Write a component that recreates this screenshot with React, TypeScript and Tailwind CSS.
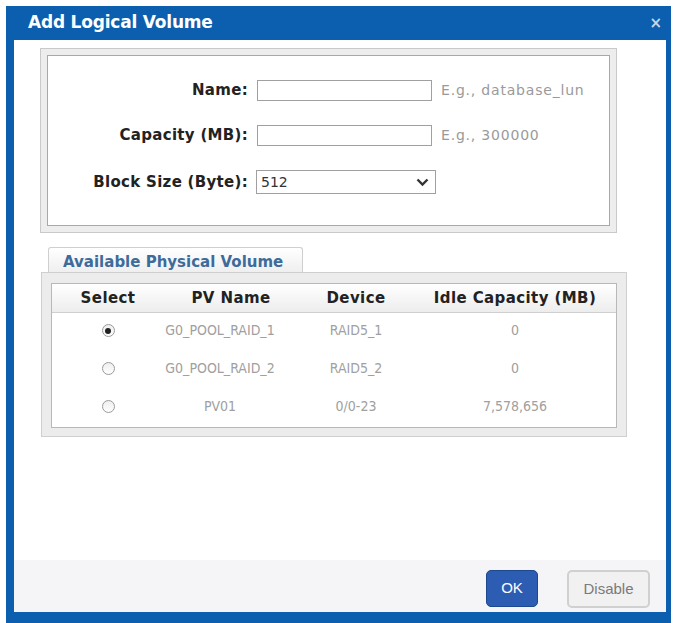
import React from "react";

const rows = [
  { name: "G0_POOL_RAID_1", device: "RAID5_1", idle: "0", checked: true },
  { name: "G0_POOL_RAID_2", device: "RAID5_2", idle: "0", checked: false },
  { name: "PV01", device: "0/0-23", idle: "7,578,656", checked: false },
];

const FormRow = ({ label, hint, children }: { label: string; hint?: string; children: React.ReactNode }) => (
  <div className="flex items-center h-[21px]">
    <div className="w-[209px] text-right font-bold text-[15px] tracking-[0.3px] text-[#222] pr-[9px] whitespace-nowrap">{label}</div>
    {children}
    {hint && <div className="ml-[9px] text-[14px] tracking-[0.8px] text-[#9a9a9a] whitespace-nowrap">{hint}</div>}
  </div>
);

const Radio = ({ checked }: { checked: boolean }) => (
  <span className="inline-flex items-center justify-center w-[13px] h-[13px] rounded-full border border-[#9a9a9a] bg-gradient-to-b from-[#eeeeee] to-white">
    {checked && <span className="w-[6px] h-[6px] rounded-full bg-[#222]" />}
  </span>
);

export default function App() {
  return (
    <div className="w-[674px] h-[623px] bg-white pt-[6px] pl-[6px] overflow-hidden" style={{ fontFamily: '"DejaVu Sans", Verdana, sans-serif' }}>
      <div className="w-[665px] h-[617px] bg-[#0b5fae] flex flex-col">
        {/* title bar */}
        <div className="h-[34px] flex items-center justify-between pl-[22px] pr-[9px] shrink-0">
          <h1 className="text-white font-bold text-[17px] tracking-[-0.2px]">Add Logical Volume</h1>
          <span className="text-[#c9d6e6] text-[15px] font-bold leading-none">×</span>
        </div>

        <div className="ml-[8px] mr-[5px] flex flex-col flex-1 min-h-0">
          {/* body */}
          <div className="bg-white h-[520px] pt-[8px]">
            <div className="ml-[26px] w-[577px] h-[185px] border border-[#c9c9c9] bg-[#ededed] p-[6px]">
              <div className="h-full border border-[#a8a8a8] bg-white pt-[24px] flex flex-col gap-[24px]">
                <FormRow label="Name:" hint="E.g., database_lun">
                  <input className="w-[175px] h-[21px] border border-[#a0a0a0] bg-white outline-none" />
                </FormRow>
                <FormRow label="Capacity (MB):" hint="E.g., 300000">
                  <input className="w-[175px] h-[21px] border border-[#a0a0a0] bg-white outline-none" />
                </FormRow>
                <div className="flex items-center h-[24px]">
                  <div className="w-[208px] text-right font-bold text-[15px] tracking-[0.3px] text-[#222] pr-[8px] whitespace-nowrap">Block Size (Byte):</div>
                  <div className="w-[180px] h-[24px] border border-[#a0a0a0] bg-white flex items-center justify-between pl-[4px] pr-[6px] text-[14px] text-[#333]">
                    <span>512</span>
                    <svg width="13" height="9" viewBox="0 0 13 9">
                      <path d="M1.5 1.5 L6.5 6.5 L11.5 1.5" fill="none" stroke="#333" strokeWidth="2.4" />
                    </svg>
                  </div>
                </div>
              </div>
            </div>

            {/* tabs */}
            <div className="mt-[14px] ml-[27px] w-[586px]">
              <div className="ml-[7px] w-[255px] h-[25px] border border-b-0 border-[#cfcfcf] rounded-t-[3px] bg-gradient-to-b from-white to-[#efefef] flex items-center pt-[5px] pl-[14px] text-[15px] font-bold text-[#3d6b9b] whitespace-nowrap">
                Available Physical Volume
              </div>
              <div className="border border-[#cfcfcf] bg-[#ececec] px-[9px] pt-[10px] pb-[8px]">
                <div className="border border-[#b8b8b8] bg-white">
                  <div className="flex h-[29px] items-center bg-gradient-to-b from-white to-[#ededed] border-b border-[#cfcfcf] font-bold text-[15px] tracking-[0.4px] text-[#222] whitespace-nowrap">
                    <div className="w-[112px] text-center">Select</div>
                    <div className="w-[134px] text-center">PV Name</div>
                    <div className="w-[116px] text-center">Device</div>
                    <div className="flex-1 text-center">Idle Capacity (MB)</div>
                  </div>
                  {rows.map((r) => (
                    <div
                      key={r.name}
                      className="flex h-[38px] items-center pb-[3px] text-[14px] text-[#a0a0a0] whitespace-nowrap"
                      style={{ fontFamily: '"DejaVu Sans Condensed", "DejaVu Sans", sans-serif' }}
                    >
                      <div className="w-[112px] flex justify-center"><Radio checked={r.checked} /></div>
                      <div className="w-[112px] text-center">{r.name}</div>
                      <div className="w-[22px]" />
                      <div className="w-[116px] text-center">{r.device}</div>
                      <div className="flex-1 text-center">{r.idle}</div>
                    </div>
                  ))}
                </div>
              </div>
            </div>
          </div>

          {/* footer */}
          <div className="h-[52px] bg-[#f5f5f7] flex items-start justify-end pt-[10px] pr-[16px] gap-[29px] shrink-0" style={{ fontFamily: '"Liberation Sans", Arial, sans-serif' }}>
            <button className="w-[52px] h-[37px] rounded-[5px] bg-[#2c5db3] border border-[#1d478f] text-white text-[15px]">OK</button>
            <button className="w-[83px] h-[38px] rounded-[5px] bg-[#f1f1f1] border-2 border-[#d0d0d0] text-[#7a7a7a] text-[15px]">Disable</button>
          </div>
        </div>
      </div>
    </div>
  );
}
